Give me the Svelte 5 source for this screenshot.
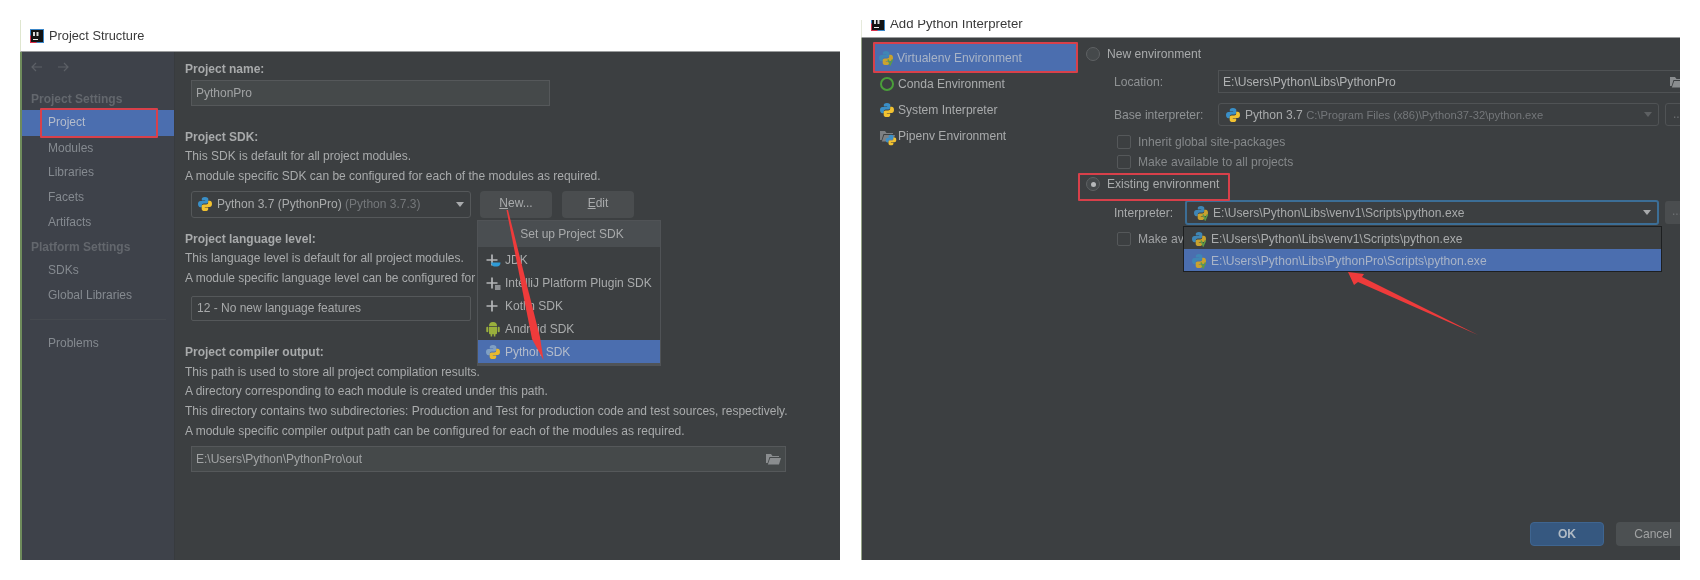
<script>
  const sideA = ['Modules', 'Libraries', 'Facets', 'Artifacts'];
  const sideB = ['SDKs', 'Global Libraries'];
  const venv1 = 'E:\\Users\\Python\\Libs\\venv1\\Scripts\\python.exe';
  const venv2 = 'E:\\Users\\Python\\Libs\\PythonPro\\Scripts\\python.exe';
  const blueP = 'M8 1C5.4 1 4.8 2 4.8 3.1v1.4H8.2v.6H3.4C2 5.1 1 6.1 1 8.1s1 3.1 2.3 3.1h1.5V9.4c0-1.1.9-2 2-2h2.7c1 0 1.8-.8 1.8-1.8V3.1C11.3 2 10.4 1 8 1z';
  const yelP = 'M8 15c2.6 0 3.2-1 3.2-2.1v-1.4H7.8v-.6h4.8c1.4 0 2.4-1 2.4-3s-1-3.1-2.3-3.1h-1.5v1.8c0 1.1-.9 2-2 2H6.5c-1 0-1.8.8-1.8 1.8v2.5C4.7 14 5.6 15 8 15z';
</script>

{#snippet py(size = 16, blue = '#3a8fc7', yellow = '#f2c230')}
  <svg class="ico" width={size} height={size} viewBox="0 0 16 16" aria-hidden="true">
    <path d={blueP} fill={blue} />
    <path d={yelP} fill={yellow} />
  </svg>
{/snippet}

{#snippet venv()}
  <svg class="ico" width="16" height="16" viewBox="0 0 16 16" aria-hidden="true">
    <path d={blueP} fill="#3f86b5" />
    <path d={yelP} fill="#c9a22e" />
    <path d="M10 9.500l2.200 5 2.300-5" fill="none" stroke="#5d9b47" stroke-width="1.600" />
  </svg>
{/snippet}

{#snippet folder(color = '#8a8d8f')}
  <svg class="ico" width="16" height="14" viewBox="0 0 16 14" aria-hidden="true">
    <path d="M1 2h5l1.500 2H14v1H4.500L2.600 11H1z" fill={color} />
    <path d="M5.200 6H16l-2 6.500H2.800z" fill={color} />
  </svg>
{/snippet}

{#snippet ij()}
  <svg class="ico" width="14" height="14" viewBox="0 0 14 14" aria-hidden="true">
    <rect width="14" height="14" fill="#3a86c8" />
    <path d="M0 6L7 14H0z" fill="#d8304a" />
    <rect x="1" y="1" width="12" height="12" fill="#141414" />
    <rect x="3" y="3" width="2" height="4" fill="#ddd" />
    <rect x="6.500" y="3" width="2" height="4" fill="#ddd" />
    <rect x="3" y="10" width="5" height="1" fill="#eee" />
  </svg>
{/snippet}

{#snippet plus(extra = '')}
  <svg class="ico" width="16" height="16" viewBox="0 0 16 16" aria-hidden="true">
    <path d="M7 2.500v11M1.500 8h11" stroke="#b4b6b8" stroke-width="1.700" fill="none" />
    {#if extra === 'cup'}
      <path d="M6 10.500h9.500c0 2.400-1.600 4-3.400 4H9.400C7.600 14.500 6.400 12.600 6 10.500z" fill="#2f9bd6" />
    {:else if extra === 'box'}
      <rect x="10" y="10" width="5.500" height="5" fill="#8d9093" />
    {/if}
  </svg>
{/snippet}

<div class="page">
  <section class="win left">
    <header class="title">
      {@render ij()}
      <span>Project Structure</span>
    </header>
    <div class="body split">
      <nav class="side">
        <div class="arrows">
          <svg width="42" height="12" viewBox="0 0 42 12" aria-hidden="true">
            <path d="M12 6H2M6 2L2 6l4 4M28 6h10M34 2l4 4-4 4" fill="none" stroke="#5c6066" stroke-width="1.200" />
          </svg>
        </div>
        <div class="sec">Project Settings</div>
        <div class="it on">Project</div>
        {#each sideA as s}<div class="it">{s}</div>{/each}
        <div class="sec p2">Platform Settings</div>
        {#each sideB as s}<div class="it">{s}</div>{/each}
        <div class="sep"></div>
        <div class="it">Problems</div>
      </nav>

      <main class="content">
        <div class="ln b">Project name:</div>
        <div class="field name">PythonPro</div>

        <div class="ln b g1">Project SDK:</div>
        <div class="ln">This SDK is default for all project modules.</div>
        <div class="ln">A module specific SDK can be configured for each of the modules as required.</div>
        <div class="sdk">
          <div class="field combo">
            {@render py(16)}
            <span class="gap">Python 3.7 (PythonPro) <span class="dim">(Python 3.7.3)</span></span>
            <i class="caret"></i>
          </div>
          <div class="btn"><u>N</u>ew...</div>
          <div class="btn"><u>E</u>dit</div>
        </div>

        <div class="ln b g2">Project language level:</div>
        <div class="ln">This language level is default for all project modules.</div>
        <div class="ln">A module specific language level can be configured for each of the modules as required.</div>
        <div class="field combo lang">12 - No new language features</div>

        <div class="ln b g3">Project compiler output:</div>
        <div class="ln">This path is used to store all project compilation results.</div>
        <div class="ln">A directory corresponding to each module is created under this path.</div>
        <div class="ln">This directory contains two subdirectories: Production and Test for production code and test sources, respectively.</div>
        <div class="ln">A module specific compiler output path can be configured for each of the modules as required.</div>
        <div class="field out">
          <span>E:\Users\Python\PythonPro\out</span>
          {@render folder()}
        </div>
      </main>
    </div>

    <div class="popup">
      <div class="pop-h">Set up Project SDK</div>
      <div class="pop-i">{@render plus('cup')}<span>JDK</span></div>
      <div class="pop-i">{@render plus('box')}<span>IntelliJ Platform Plugin SDK</span></div>
      <div class="pop-i">{@render plus()}<span>Kotlin SDK</span></div>
      <div class="pop-i">
        <svg class="ico" width="16" height="17" viewBox="0 0 16 17" aria-hidden="true">
          <path d="M4 6a4 4 0 0 1 8 0zM4 6.800h8v6.400a1 1 0 0 1-1 1h-.6V16.500H8.800v-2.300H7.200v2.300H5.600v-2.300H5a1 1 0 0 1-1-1z" fill="#9ab03c" />
          <rect x="1.300" y="6.800" width="2" height="5.500" rx="1" fill="#9ab03c" />
          <rect x="12.700" y="6.800" width="2" height="5.500" rx="1" fill="#9ab03c" />
        </svg>
        <span>Android SDK</span>
      </div>
      <div class="pop-i on">{@render py(16, '#7f9fc4', '#e8b92e')}<span>Python SDK</span></div>
    </div>
    <div class="mark m-project"></div>
  </section>

  <section class="win right">
    <header class="title short">
      {@render ij()}
      <span>Add Python Interpreter</span>
    </header>
    <div class="body split2">
      <nav class="envs">
        <div class="env on">{@render venv()}<span>Virtualenv Environment</span></div>
        <div class="env">
          <svg class="ico" width="16" height="16" viewBox="0 0 16 16" aria-hidden="true">
            <circle cx="8" cy="8" r="6" fill="none" stroke="#4a9f3a" stroke-width="2" />
          </svg>
          <span>Conda Environment</span>
        </div>
        <div class="env">{@render py(16)}<span>System Interpreter</span></div>
        <div class="env">
          <span class="stack">
            {@render folder('#7d8083')}
            <svg class="mini" width="12" height="12" viewBox="0 0 16 16" aria-hidden="true">
              <path d={blueP} fill="#3a8fc7" /><path d={yelP} fill="#f2c230" />
            </svg>
          </span>
          <span>Pipenv Environment</span>
        </div>
      </nav>

      <main class="form">
        <div class="radio-row r1"><i class="radio"></i><span>New environment</span></div>
        <div class="row loc">
          <span class="lab">Location:</span>
          <div class="field wide"><span>E:\Users\Python\Libs\PythonPro</span>{@render folder()}</div>
        </div>
        <div class="row base">
          <span class="lab">Base interpreter:</span>
          <div class="field pick">
            {@render py(16)}
            <span class="gap">Python 3.7 <span class="dim small">C:\Program Files (x86)\Python37-32\python.exe</span></span>
            <i class="caret faded"></i>
          </div>
          <div class="more plain">...</div>
        </div>
        <div class="check c1"><i class="box"></i><span class="dim2">Inherit global site-packages</span></div>
        <div class="check"><i class="box"></i><span class="dim2">Make available to all projects</span></div>
        <div class="radio-row r2"><i class="radio sel"></i><span>Existing environment</span></div>
        <div class="row inter">
          <span class="lab short">Interpreter:</span>
          <div class="field pick focus">
            {@render venv()}
            <span class="gap">{venv1}</span>
            <i class="caret"></i>
          </div>
          <div class="more">...</div>
        </div>
        <div class="check c3"><i class="box"></i><span>Make available to all projects</span></div>
        <footer class="foot">
          <div class="act ok">OK</div>
          <div class="act">Cancel</div>
        </footer>
      </main>
    </div>

    <div class="list">
      <div class="opt">{@render venv()}<span>{venv1}</span></div>
      <div class="opt on">{@render venv()}<span>{venv2}</span></div>
    </div>
    <div class="mark m-venv"></div>
    <div class="mark m-exist"></div>
  </section>

  <svg class="arrows-layer" width="1700" height="580" viewBox="0 0 1700 580" aria-hidden="true">
    <path d="M506.500 210L508 210L540 337L543.500 360L532 339Z" fill="#ee3b3b" />
    <path d="M1348 272L1364 274L1362 277L1478 335L1358 282L1354 285Z" fill="#ee3b3b" />
  </svg>
</div>

<style>
  :global(body) { margin: 0; background: #fff; }
  .page {
    position: relative;
    width: 1700px;
    height: 580px;
    box-sizing: border-box;
    padding: 20px;
    display: flex;
    gap: 21px;
    font: 12px/20px "Liberation Sans", Arial, sans-serif;
    color: #a9abac;
    overflow: hidden;
  }
  .win {
    position: relative;
    width: 820px;
    height: 540px;
    display: flex;
    flex-direction: column;
    overflow: hidden;
    box-sizing: border-box;
    filter: blur(0.6px);
  }
  .win.right { width: 819px; }
  .title {
    height: 32px;
    flex: none;
    box-sizing: border-box;
    display: flex;
    align-items: center;
    gap: 5px;
    padding-left: 9px;
    background: #fff;
    color: #3a3a3a;
    font-size: 12.800px;
    border-bottom: 1px solid #9a9c9d;
    border-left: 1px solid #dfe6cf;
  }
  .title.short {
    height: 18px;
    padding-left: 9px;
    align-items: flex-start;
    gap: 5px;
    line-height: 8px;
    font-size: 13.200px;
    border-left-color: #e6eadc;
  }
  .title.short :global(svg) { margin-top: -3px; }
  .title.short span { margin-top: 0; }
  .ico { flex: none; }
  .body { flex: 1; min-height: 0; background: #3c3f41; display: flex; }
  .left .body { border-left: 2px solid #6f8c5c; }
  .right .body { border-left: 1px solid #93a385; }

  .side {
    width: 153px;
    flex: none;
    background: #3e424a;
    border-right: 1px solid #383b3e;
    box-sizing: border-box;
    padding-top: 8px;
  }
  .arrows { height: 14px; padding-left: 8px; margin-bottom: 13px; display: flex; align-items: center; }
  .sec {
    height: 24.700px;
    line-height: 24.700px;
    padding-left: 9px;
    font-weight: 700;
    color: #63676d;
  }
  .sec.p2 { margin-top: 1px; margin-bottom: -2px; }
  .it {
    height: 24.700px;
    line-height: 24px;
    padding-left: 26px;
    color: #858a90;
  }
  .it.on { background: #4b6eaf; color: #b4bccb; height: 26px; margin-top: -2px; }
  .sep { height: 1px; background: #45494f; margin: 11px 8px 11px 8px; }

  .content { flex: 1; padding: 8px 0 0 10px; min-width: 0; }
  .ln { height: 19.700px; line-height: 19.700px; white-space: nowrap; }
  .b { font-weight: 700; color: #a8aaab; }
  .g1 { margin-top: 22px; }
  .g2 { margin-top: 12px; }
  .g3 { margin-top: 22px; }

  .field {
    box-sizing: border-box;
    display: flex;
    align-items: center;
    border: 1px solid #55585a;
    padding: 0 4px;
    white-space: nowrap;
  }
  .name { width: 359px; height: 26px; margin: 0 0 0 6px; background: #45494a; color: #a2a4a5; }
  .sdk { display: flex; margin: 4px 0 0 6px; gap: 9px; height: 27px; }
  .combo { width: 280px; height: 27px; border-radius: 3px; padding-left: 5px; position: relative; }
  .gap { margin-left: 4px; }
  .dim { color: #74777a; }
  .dim.small { font-size: 11.200px; }
  .dim2 { color: #85888a; }
  .caret {
    margin-left: auto;
    width: 0;
    height: 0;
    border: 4px solid transparent;
    border-top: 5px solid #a8aaac;
    border-bottom: 0;
    flex: none;
    margin-right: 2px;
  }
  .caret.faded { border-top-color: #5d6062; }
  .btn {
    width: 72px;
    height: 27px;
    line-height: 25px;
    text-align: center;
    background: #4a4d4f;
    border-radius: 4px;
  }
  .btn + .btn { margin-left: 1px; }
  .lang { height: 25px; margin: 7px 0 0 6px; border-radius: 2px; color: #a8aaab; padding-left: 5px; }
  .out {
    width: 595px;
    height: 26px;
    margin: 5px 0 0 6px;
    background: #45494a;
    justify-content: space-between;
    color: #a2a4a5;
  }

  .popup {
    position: absolute;
    left: 457px;
    top: 200px;
    width: 184px;
    height: 146px;
    box-sizing: border-box;
    background: #3c3f41;
    border: 1px solid #505356;
    border-bottom-width: 3px;
  }
  .pop-h {
    height: 26px;
    line-height: 26px;
    text-align: center;
    background: #4a4e51;
    color: #a8aaab;
    padding-left: 6px;
  }
  .pop-i {
    height: 23px;
    display: flex;
    align-items: center;
    gap: 4px;
    padding-left: 7px;
    white-space: nowrap;
  }
  .pop-h + .pop-i { margin-top: 1px; }
  .pop-i.on { background: #4b6eaf; color: #b4bccb; }

  .mark {
    position: absolute;
    box-sizing: border-box;
    border: 2px solid #d8404a;
    border-radius: 1px;
  }
  .m-project { left: 20px; top: 88px; width: 118px; height: 30px; }
  .m-venv { left: 12px; top: 22px; width: 205px; height: 31px; }
  .m-exist { left: 217px; top: 153px; width: 152px; height: 28px; }

  .split2 { display: flex; }
  .envs { width: 216px; flex: none; padding-top: 6px; box-sizing: border-box; }
  .env {
    height: 26px;
    display: flex;
    align-items: center;
    gap: 3px;
    padding-left: 5px;
    margin-left: 12px;
    white-space: nowrap;
    font-size: 12.100px;
  }
  .env.on {
    background: #4b6eaf;
    color: #a9b4c7;
    height: 28px;
    margin-bottom: -1px;
    padding-left: 4px;
    margin-left: 12px;
    gap: 3px;
  }
  .stack { position: relative; width: 16px; height: 14px; flex: none; }
  .mini { position: absolute; right: -2px; bottom: -3px; }

  .form {
    flex: 1;
    min-width: 0;
    display: flex;
    flex-direction: column;
    overflow: hidden;
    padding-left: 8px;
    padding-bottom: 14px;
    font-size: 12.100px;
  }
  .radio-row { height: 20px; display: flex; align-items: center; gap: 7px; flex: none; }
  .r1 { margin-top: 6px; }
  .r2 { margin-top: 2px; }
  .radio {
    box-sizing: border-box;
    width: 14px;
    height: 14px;
    border-radius: 50%;
    border: 1px solid #5e6163;
    background: #45494b;
    position: relative;
    flex: none;
  }
  .radio.sel::after {
    content: "";
    position: absolute;
    left: 3.500px;
    top: 3.500px;
    width: 5px;
    height: 5px;
    border-radius: 50%;
    background: #b6b8ba;
  }
  .row { display: flex; padding-left: 28px; align-items: center; flex: none; }
  .lab { width: 104px; flex: none; color: #8f9294; }
  .lab.short { width: 71px; color: #a8aaab; }
  .loc { margin-top: 6px; height: 23px; }
  .base { margin-top: 10px; height: 23px; }
  .inter { margin-top: 6px; height: 25px; }
  .wide { width: 472px; height: 23px; flex: none; justify-content: space-between; padding-right: 4px; border-color: #4f5254; color: #b0b2b3; }
  .pick { width: 441px; height: 23px; flex: none; border-radius: 3px; padding-left: 6px; border-color: #505355; }
  .inter .pick { width: 474px; height: 25px; border: 2px solid #3c6e96; color: #a8aaab; }
  .more {
    width: 30px;
    height: 23px;
    flex: none;
    margin-left: 6px;
    background: #4a4d4f;
    border-radius: 3px;
    line-height: 20px;
    padding-left: 7px;
    box-sizing: border-box;
    color: #6f7274;
  }
  .more.plain { background: none; border: 1px solid #505355; }
  .check { display: flex; align-items: center; gap: 7px; height: 20px; padding-left: 31px; flex: none; white-space: nowrap; }
  .c1 { margin-top: 6px; }
  .c3 { margin-top: 4px; color: #a0a2a4; }
  .box {
    box-sizing: border-box;
    width: 14px;
    height: 14px;
    border: 1px solid #55585a;
    border-radius: 2px;
    flex: none;
  }
  .foot { margin-top: auto; display: flex; gap: 12px; flex: none; margin-left: 444px; }
  .act {
    width: 74px;
    height: 24px;
    flex: none;
    border-radius: 4px;
    background: #4c5052;
    text-align: center;
    line-height: 24px;
    color: #a0a2a3;
  }
  .act.ok { background: #365880; color: #b0bac4; font-weight: 700; border: 1px solid #3f6590; box-sizing: border-box; line-height: 22px; }

  .list {
    position: absolute;
    left: 323px;
    top: 207px;
    width: 477px;
    height: 44px;
    background: #3c3f41;
    box-shadow: 0 0 0 1px #1d1f20;
  }
  .opt {
    height: 21px;
    display: flex;
    align-items: center;
    gap: 4px;
    padding: 2px 0 0 7px;
    box-sizing: border-box;
    white-space: nowrap;
    font-size: 12.100px;
  }
  .opt.on { background: #4b6eaf; color: #a9b4c7; height: 22px; margin-top: 1px; }

  .arrows-layer { position: absolute; left: 0; top: 0; pointer-events: none; filter: blur(0.3px); }
</style>
